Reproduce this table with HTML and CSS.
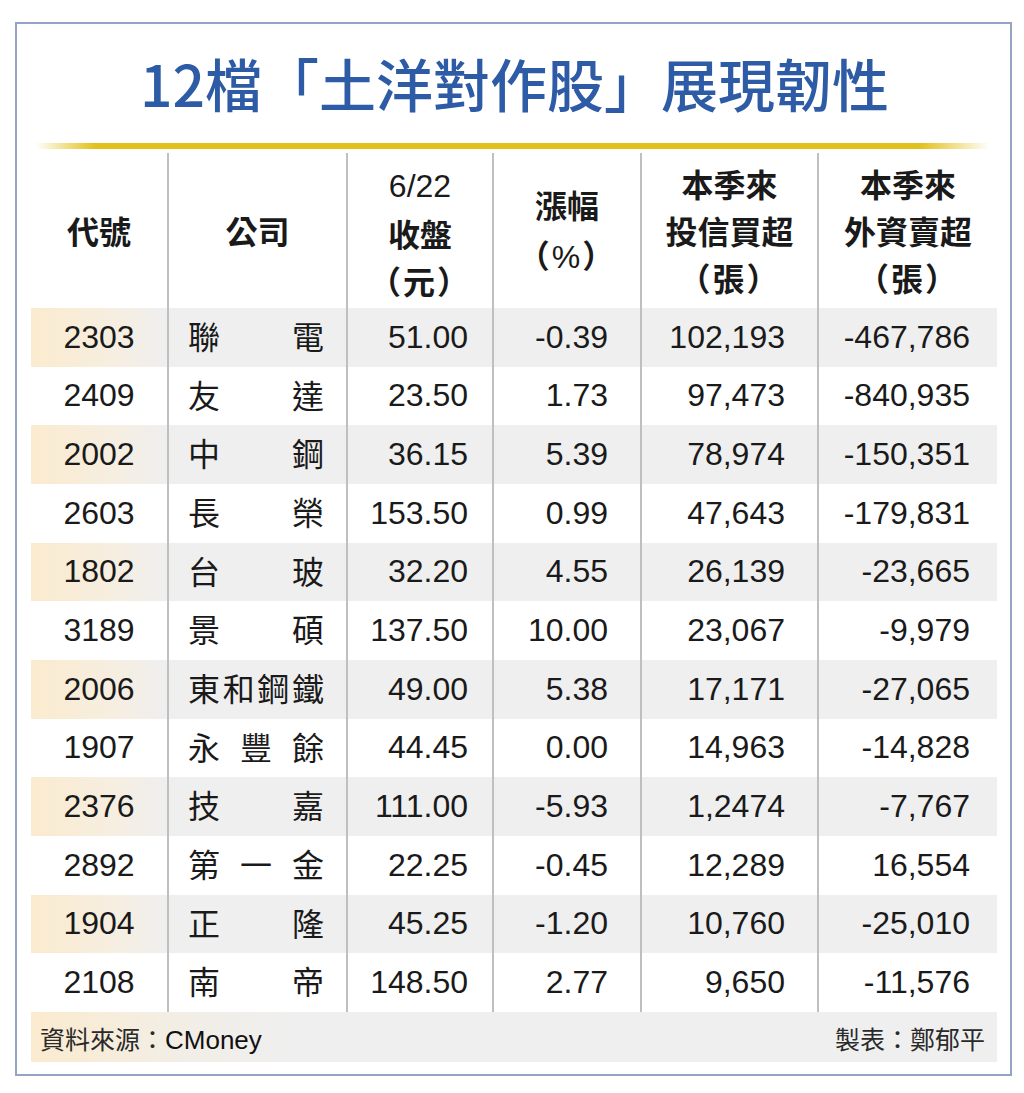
FILE: index.html
```html
<!DOCTYPE html>
<html lang="zh-Hant">
<head>
<meta charset="utf-8">
<title>12檔「土洋對作股」展現韌性</title>
<link rel="stylesheet" href="styles.css">
</head>
<body>
<div class="frame">
  <h1 class="title">12檔「土洋對作股」展現韌性</h1>
  <div class="rule"></div>
  <div class="table">
    <div class="row head">
      <div class="c c1">代號</div>
      <div class="c c2">公司</div>
      <div class="c c3"><span class="num">6/22</span><br>收盤<br><span class="paren">（元）</span></div>
      <div class="c c4">漲幅<br><span class="paren">（<span class="num">%</span>）</span></div>
      <div class="c c5">本季來<br>投信買超<br><span class="paren">（張）</span></div>
      <div class="c c6">本季來<br>外資賣超<br><span class="paren">（張）</span></div>
    </div>
    <div class="row alt"><div class="c c1">2303</div><div class="c c2">聯電</div><div class="c c3">51.00</div><div class="c c4">-0.39</div><div class="c c5">102,193</div><div class="c c6">-467,786</div></div>
    <div class="row"><div class="c c1">2409</div><div class="c c2">友達</div><div class="c c3">23.50</div><div class="c c4">1.73</div><div class="c c5">97,473</div><div class="c c6">-840,935</div></div>
    <div class="row alt"><div class="c c1">2002</div><div class="c c2">中鋼</div><div class="c c3">36.15</div><div class="c c4">5.39</div><div class="c c5">78,974</div><div class="c c6">-150,351</div></div>
    <div class="row"><div class="c c1">2603</div><div class="c c2">長榮</div><div class="c c3">153.50</div><div class="c c4">0.99</div><div class="c c5">47,643</div><div class="c c6">-179,831</div></div>
    <div class="row alt"><div class="c c1">1802</div><div class="c c2">台玻</div><div class="c c3">32.20</div><div class="c c4">4.55</div><div class="c c5">26,139</div><div class="c c6">-23,665</div></div>
    <div class="row"><div class="c c1">3189</div><div class="c c2">景碩</div><div class="c c3">137.50</div><div class="c c4">10.00</div><div class="c c5">23,067</div><div class="c c6">-9,979</div></div>
    <div class="row alt"><div class="c c1">2006</div><div class="c c2">東和鋼鐵</div><div class="c c3">49.00</div><div class="c c4">5.38</div><div class="c c5">17,171</div><div class="c c6">-27,065</div></div>
    <div class="row"><div class="c c1">1907</div><div class="c c2">永豐餘</div><div class="c c3">44.45</div><div class="c c4">0.00</div><div class="c c5">14,963</div><div class="c c6">-14,828</div></div>
    <div class="row alt"><div class="c c1">2376</div><div class="c c2">技嘉</div><div class="c c3">111.00</div><div class="c c4">-5.93</div><div class="c c5">1,2474</div><div class="c c6">-7,767</div></div>
    <div class="row"><div class="c c1">2892</div><div class="c c2">第一金</div><div class="c c3">22.25</div><div class="c c4">-0.45</div><div class="c c5">12,289</div><div class="c c6">16,554</div></div>
    <div class="row alt"><div class="c c1">1904</div><div class="c c2">正隆</div><div class="c c3">45.25</div><div class="c c4">-1.20</div><div class="c c5">10,760</div><div class="c c6">-25,010</div></div>
    <div class="row"><div class="c c1">2108</div><div class="c c2">南帝</div><div class="c c3">148.50</div><div class="c c4">2.77</div><div class="c c5">9,650</div><div class="c c6">-11,576</div></div>
    <div class="foot">
      <span>資料來源：<span class="num">CMoney</span></span>
      <span>製表：鄭郁平</span>
    </div>
  </div>
</div>
</body>
</html>
```

FILE: styles.css
```css
html, body {
  margin: 0;
  padding: 0;
  background: #ffffff;
}

body {
  font-family: "Liberation Sans", "Noto Sans CJK TC", sans-serif;
  color: #1a1a1a;
}

.frame {
  box-sizing: border-box;
  margin: 22px 0 0 15px;
  width: 997px;
  height: 1054px;
  border: 2px solid #93a4c4;
  padding: 0 12px 0 14px;
}

.title {
  margin: 0;
  padding-top: 23px;
  height: 70px;
  line-height: 70px;
  font-family: "Noto Sans CJK TC", sans-serif;
  font-weight: 500;
  font-size: 57px;
  color: #2e5ba5;
  text-align: center;
}

.rule {
  margin: 26px 8px 0 4px;
  height: 6px;
  background: linear-gradient(to right,
    rgba(229, 196, 30, 0) 0,
    #e3c11d 60px,
    #e3c11d calc(100% - 70px),
    rgba(229, 196, 30, 0) 100%);
}

.table {
  margin-top: 4px;
  width: 966px;
}

.row {
  display: grid;
  grid-template-columns: 136px 179px 146px 148px 177px 180px;
  height: 58.67px;
  font-size: 32px;
}

.row.alt {
  background: #efefef;
}

.row.alt .c1 {
  background: linear-gradient(to right, #fbebcf 0, #f6eee0 60%, #efefef 100%);
}

.c {
  box-sizing: border-box;
  display: flex;
  align-items: center;
  justify-content: flex-end;
  white-space: nowrap;
}

.c + .c {
  border-left: 2px solid #bfbfbf;
}

.c1 {
  justify-content: center;
}

.c2 {
  display: block;
  font-family: "Noto Sans CJK TC", sans-serif;
  font-size: 32px;
  line-height: 55px;
  padding: 0 22px 0 19px;
  text-align: justify;
  text-align-last: justify;
  text-justify: inter-character;
}

.c3 { padding-right: 24px; }
.c4 { padding-right: 32px; }
.c5 { padding-right: 32px; }
.c6 { padding-right: 27px; }

.row.head {
  height: 155px;
  font-family: "Noto Sans CJK TC", sans-serif;
  font-weight: 700;
  font-size: 32px;
}

.row.head .c {
  display: block;
  padding: 0;
  text-align: center;
  line-height: 47px;
  align-self: stretch;
}

.row.head .c1,
.row.head .c2,
.row.head .c4 {
  display: flex;
  flex-direction: column;
  justify-content: center;
}

.row.head .c2 {
  text-align-last: center;
  line-height: 47px;
}

.row.head .c3,
.row.head .c5,
.row.head .c6 {
  padding-top: 7px;
}

.row.head .c4 {
  line-height: 50px;
}

.num {
  font-family: "Liberation Sans", sans-serif;
  font-weight: 400;
}

.paren {
  letter-spacing: 2px;
}

.foot {
  display: flex;
  justify-content: space-between;
  align-items: center;
  height: 50px;
  padding: 2px 12px 0 9px;
  box-sizing: border-box;
  font-family: "Noto Sans CJK TC", sans-serif;
  font-size: 25px;
  color: #2a2a2a;
  background: linear-gradient(to right, #fbebcf 0, #f2eee6 150px, #efefef 260px, #efefef 100%);
}

.foot .num {
  font-size: 26px;
  color: #111;
}
```
